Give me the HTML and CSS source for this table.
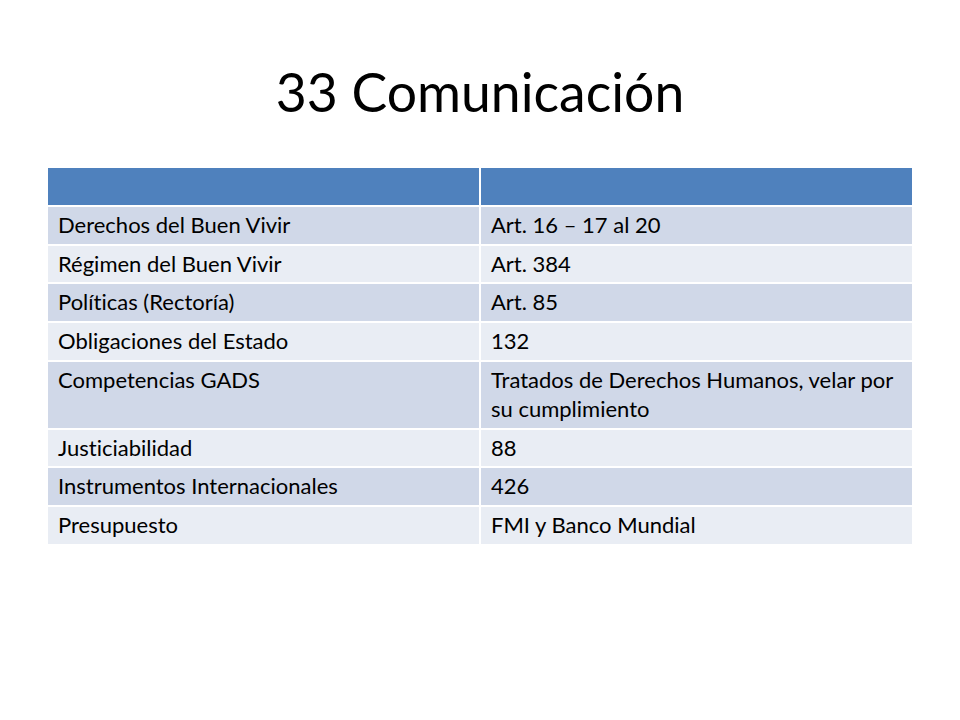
FILE: index.html
```html
<!DOCTYPE html>
<html lang="es">
<head>
<meta charset="utf-8">
<title>33 Comunicación</title>
<link rel="stylesheet" href="styles.css">
</head>
<body>
<main class="slide">
  <h1 class="title">33 Comunicación</h1>
  <table class="grid">
    <colgroup><col class="c1"><col class="c2"></colgroup>
    <thead>
      <tr class="head"><th></th><th></th></tr>
    </thead>
    <tbody>
      <tr class="odd"><td>Derechos del Buen Vivir</td><td>Art. 16 – 17 al 20</td></tr>
      <tr class="even"><td>Régimen del Buen Vivir</td><td>Art. 384</td></tr>
      <tr class="odd"><td>Políticas (Rectoría)</td><td>Art. 85</td></tr>
      <tr class="even"><td>Obligaciones del Estado</td><td>132</td></tr>
      <tr class="odd"><td>Competencias GADS</td><td>Tratados de Derechos Humanos, velar por su cumplimiento</td></tr>
      <tr class="even"><td>Justiciabilidad</td><td>88</td></tr>
      <tr class="odd"><td>Instrumentos Internacionales</td><td>426</td></tr>
      <tr class="even"><td>Presupuesto</td><td>FMI y Banco Mundial</td></tr>
    </tbody>
  </table>
</main>
</body>
</html>
```

FILE: styles.css
```css
html, body {
  margin: 0;
  padding: 0;
  background: #ffffff;
}

.slide {
  width: 960px;
  height: 720px;
  display: flex;
  flex-direction: column;
  font-family: "Lato", "Open Sans", sans-serif;
  font-variant-ligatures: none;
  color: #000;
}

.title {
  margin: 61px 0 0;
  height: 60px;
  line-height: 60px;
  font-size: 53.5px;
  font-weight: 400;
  text-align: center;
}

.grid {
  margin: 45px 0 0 46px;
  width: 868px;
  border-collapse: separate;
  border-spacing: 2px;
  table-layout: fixed;
  font-size: 22px;
}

.grid th,
.grid td {
  padding: 4px 10px;
  line-height: 28.8px;
  height: 28.8px;
  text-align: left;
  vertical-align: top;
  font-weight: 400;
}

.head th { background: #4f81bd; }
.odd td { background: #d0d8e8; }
.even td { background: #e9edf4; }
```
